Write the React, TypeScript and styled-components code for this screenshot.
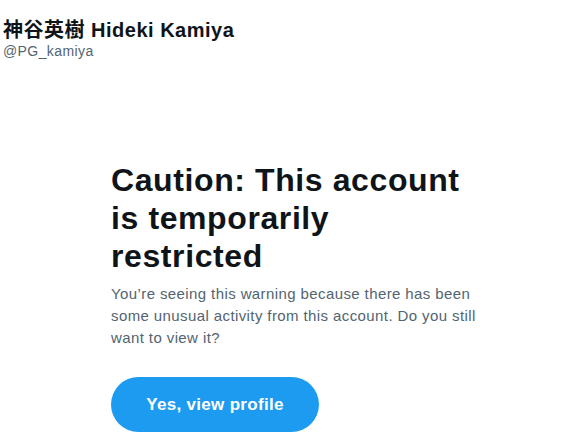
import styled, { createGlobalStyle } from "styled-components";

const GlobalStyle = createGlobalStyle`
  html, body {
    margin: 0;
    padding: 0;
    background: #ffffff;
  }
  body {
    font-family: "Liberation Sans", Arial, "Noto Sans CJK JP", sans-serif;
    color: #0f1419;
  }
`;

const App = () => {
  return (
    <Page>
      <GlobalStyle />
      <ProfileHeader>
        <DisplayName>神谷英樹 Hideki Kamiya</DisplayName>
        <Handle>@PG_kamiya</Handle>
      </ProfileHeader>
      <Interstitial>
        <Title>Caution: This account is temporarily restricted</Title>
        <Description>
          You’re seeing this warning because there has been some unusual
          activity from this account. Do you still want to view it?
        </Description>
        <ViewButton type="button">Yes, view profile</ViewButton>
      </Interstitial>
    </Page>
  );
};

export default App;

const Page = styled.div`
  width: 581px;
  height: 442px;
  overflow: hidden;
  display: flex;
  flex-direction: column;
`;

const ProfileHeader = styled.div`
  display: flex;
  flex-direction: column;
  padding: 18px 0 0 3px;
`;

const DisplayName = styled.h2`
  margin: 0;
  font-family: "Liberation Sans", Arial, "Noto Sans CJK JP", sans-serif;
  font-size: 20px;
  line-height: 24px;
  font-weight: 700;
  letter-spacing: 0.5px;
  color: #0f1419;
`;

const Handle = styled.div`
  font-size: 14px;
  line-height: 19px;
  letter-spacing: 0.4px;
  color: #536471;
`;

const Interstitial = styled.div`
  display: flex;
  flex-direction: column;
  align-items: flex-start;
  width: 372px;
  padding: 100px 0 0 111px;
`;

const Title = styled.h1`
  margin: 0;
  max-width: 360px;
  font-size: 32px;
  line-height: 38px;
  font-weight: 700;
  letter-spacing: 0.6px;
  color: #0f1419;
`;

const Description = styled.p`
  margin: 8px 0 0;
  font-size: 15px;
  line-height: 22px;
  letter-spacing: 0.4px;
  color: #536471;
`;

const ViewButton = styled.button`
  margin-top: 28px;
  width: 208px;
  height: 55px;
  border: none;
  border-radius: 28px;
  background: #1d9bf0;
  color: #ffffff;
  font-family: "Liberation Sans", Arial, sans-serif;
  font-size: 17px;
  font-weight: 700;
  letter-spacing: 0.3px;
  cursor: pointer;
`;
